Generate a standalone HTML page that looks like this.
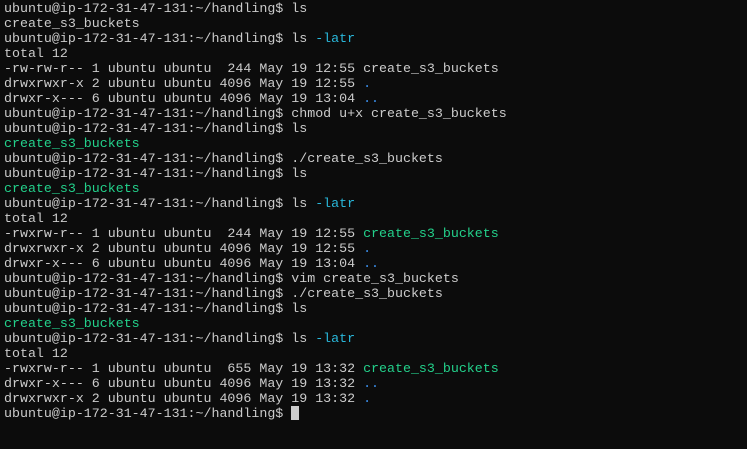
<!DOCTYPE html>
<html><head><style>
html,body{margin:0;padding:0;background:#0c0c0c;width:747px;height:449px;overflow:hidden}
pre{margin:0;padding:1px 0 0 4px;font-family:"Liberation Mono",monospace;font-size:13.3px;line-height:15px;color:#cccccc}
.g{color:#23d18b}.b{color:#3b8eea}.c{color:#29b8db}
.cur{display:inline-block;width:8px;height:14px;background:#cccccc;vertical-align:-3px}
</style></head><body><pre>ubuntu@ip-172-31-47-131:~/handling$ ls
create_s3_buckets
ubuntu@ip-172-31-47-131:~/handling$ ls <span class="c">-latr</span>
total 12
-rw-rw-r-- 1 ubuntu ubuntu  244 May 19 12:55 create_s3_buckets
drwxrwxr-x 2 ubuntu ubuntu 4096 May 19 12:55 <span class="b">.</span>
drwxr-x--- 6 ubuntu ubuntu 4096 May 19 13:04 <span class="b">..</span>
ubuntu@ip-172-31-47-131:~/handling$ chmod u+x create_s3_buckets
ubuntu@ip-172-31-47-131:~/handling$ ls
<span class="g">create_s3_buckets</span>
ubuntu@ip-172-31-47-131:~/handling$ ./create_s3_buckets
ubuntu@ip-172-31-47-131:~/handling$ ls
<span class="g">create_s3_buckets</span>
ubuntu@ip-172-31-47-131:~/handling$ ls <span class="c">-latr</span>
total 12
-rwxrw-r-- 1 ubuntu ubuntu  244 May 19 12:55 <span class="g">create_s3_buckets</span>
drwxrwxr-x 2 ubuntu ubuntu 4096 May 19 12:55 <span class="b">.</span>
drwxr-x--- 6 ubuntu ubuntu 4096 May 19 13:04 <span class="b">..</span>
ubuntu@ip-172-31-47-131:~/handling$ vim create_s3_buckets
ubuntu@ip-172-31-47-131:~/handling$ ./create_s3_buckets
ubuntu@ip-172-31-47-131:~/handling$ ls
<span class="g">create_s3_buckets</span>
ubuntu@ip-172-31-47-131:~/handling$ ls <span class="c">-latr</span>
total 12
-rwxrw-r-- 1 ubuntu ubuntu  655 May 19 13:32 <span class="g">create_s3_buckets</span>
drwxr-x--- 6 ubuntu ubuntu 4096 May 19 13:32 <span class="b">..</span>
drwxrwxr-x 2 ubuntu ubuntu 4096 May 19 13:32 <span class="b">.</span>
ubuntu@ip-172-31-47-131:~/handling$ <span class="cur"></span></pre></body></html>
